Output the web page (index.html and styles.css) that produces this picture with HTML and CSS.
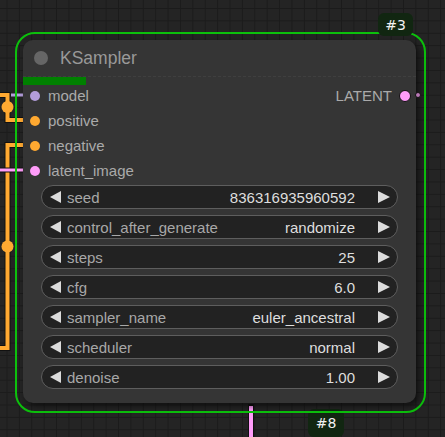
FILE: index.html
```html
<!DOCTYPE html>
<html>
<head>
<meta charset="utf-8">
<link rel="stylesheet" href="styles.css">
</head>
<body>
<div class="canvas">
  <svg class="wires" width="445" height="437" viewBox="0 0 445 437">
    <g fill="none" stroke-linejoin="miter">
      <path d="M0 95 H7.5 V120 H25" stroke="#111" stroke-width="6"/>
      <path d="M0 95 H7.5 V120 H25" stroke="#ffa931" stroke-width="4"/>
      <path d="M25 145 H7.5 V348 H0" stroke="#111" stroke-width="6"/>
      <path d="M25 145 H7.5 V348 H0" stroke="#ffa931" stroke-width="4"/>
      <path d="M0 170 H25" stroke="#111" stroke-width="5"/>
      <path d="M0 170 H25" stroke="#ff9cf9" stroke-width="3"/>
      <path d="M11 95 H25" stroke="#b39ddb" stroke-width="3"/>
      <path d="M251 404 V437" stroke="#111" stroke-width="6"/>
      <path d="M251 406 V437" stroke="#ff9cf9" stroke-width="4"/>
    </g>
    <circle cx="7.5" cy="107" r="6" fill="#ffa931"/>
    <circle cx="7.5" cy="246.5" r="6" fill="#ffa931"/>
  </svg>
  <div class="badge badge-8">#8</div>
  <div class="selection"></div>
  <div class="node">
    <div class="title">
      <span class="title-dot"></span>
      <span class="title-text">KSampler</span>
    </div>
    <div class="progress"></div>
    <div class="slots">
      <div class="inputs">
        <div class="slot"><span class="dot dot-model"></span><span class="slot-label">model</span></div>
        <div class="slot"><span class="dot dot-cond"></span><span class="slot-label">positive</span></div>
        <div class="slot"><span class="dot dot-cond"></span><span class="slot-label">negative</span></div>
        <div class="slot"><span class="dot dot-latent"></span><span class="slot-label">latent_image</span></div>
      </div>
      <div class="outputs">
        <div class="slot"><span class="slot-label">LATENT</span><span class="dot dot-latent dot-out"></span></div>
      </div>
    </div>
    <div class="widgets">
      <div class="widget"><span class="arrow arrow-left"></span><span class="w-label">seed</span><span class="w-value">836316935960592</span><span class="arrow arrow-right"></span></div>
      <div class="widget"><span class="arrow arrow-left"></span><span class="w-label">control_after_generate</span><span class="w-value">randomize</span><span class="arrow arrow-right"></span></div>
      <div class="widget"><span class="arrow arrow-left"></span><span class="w-label">steps</span><span class="w-value">25</span><span class="arrow arrow-right"></span></div>
      <div class="widget"><span class="arrow arrow-left"></span><span class="w-label">cfg</span><span class="w-value">6.0</span><span class="arrow arrow-right"></span></div>
      <div class="widget"><span class="arrow arrow-left"></span><span class="w-label">sampler_name</span><span class="w-value">euler_ancestral</span><span class="arrow arrow-right"></span></div>
      <div class="widget"><span class="arrow arrow-left"></span><span class="w-label">scheduler</span><span class="w-value">normal</span><span class="arrow arrow-right"></span></div>
      <div class="widget"><span class="arrow arrow-left"></span><span class="w-label">denoise</span><span class="w-value">1.00</span><span class="arrow arrow-right"></span></div>
    </div>
  </div>
  <div class="badge badge-3">#3</div>
  <span class="link-stub"></span>
</div>
</body>
</html>
```

FILE: styles.css
```css
html, body {
  margin: 0;
  padding: 0;
  background: #232323;
}

.canvas {
  position: relative;
  width: 445px;
  height: 437px;
  overflow: hidden;
  background-color: #242424;
  background-image:
    linear-gradient(to right, #1b1b1b 1px, transparent 1px),
    linear-gradient(to bottom, #1b1b1b 1px, transparent 1px);
  background-size: 12.4px 12.4px;
  background-position: 6.5px 8px;
  font-family: "Liberation Sans", Arial, sans-serif;
}

.wires {
  position: absolute;
  left: 0;
  top: 0;
}

.selection {
  position: absolute;
  left: 15px;
  top: 32px;
  width: 411px;
  height: 381px;
  box-sizing: border-box;
  border: 2px solid #0cc00c;
  border-radius: 20px;
}

.badge {
  position: absolute;
  background: #112611;
  color: #f2f2f2;
  font-family: "DejaVu Sans", sans-serif;
  font-size: 14px;
  border-radius: 6px;
  display: flex;
  align-items: center;
  justify-content: center;
}

.badge-3 {
  left: 378px;
  top: 13px;
  width: 35px;
  height: 23px;
}

.badge-8 {
  left: 308px;
  top: 409px;
  width: 36px;
  height: 22px;
  padding-bottom: 6px;
  align-items: flex-end;
}

.link-stub {
  position: absolute;
  left: 415px;
  top: 92px;
  width: 4px;
  height: 4px;
  border-radius: 50%;
  background: #b978b6;
  border: 1px solid #111;
}

.node {
  position: absolute;
  left: 23px;
  top: 40px;
  width: 393px;
  height: 363px;
  box-sizing: border-box;
  background: #353535;
  border-radius: 10px;
  box-shadow: 3px 3px 6px rgba(0, 0, 0, 0.55);
  padding-bottom: 14px;
}

.title {
  height: 37px;
  box-sizing: border-box;
  display: flex;
  align-items: center;
  padding-left: 11px;
  border-bottom: 1px dashed #3f3f3f;
}

.title-dot {
  width: 14px;
  height: 14px;
  border-radius: 50%;
  background: #666;
  margin-right: 12px;
}

.title-text {
  color: #999;
  font-size: 17.5px;
}

.progress {
  position: absolute;
  left: 0;
  top: 37px;
  width: 63px;
  height: 8px;
  background: #008000;
}

.slots {
  display: flex;
  justify-content: space-between;
  padding-top: 6px;
}

.inputs, .outputs {
  display: flex;
  flex-direction: column;
}

.slot {
  height: 25px;
  display: flex;
  align-items: center;
  font-size: 15px;
  color: #aaa;
}

.inputs .slot {
  padding-left: 7px;
}

.outputs .slot {
  padding-right: 5px;
}

.dot {
  width: 10px;
  height: 10px;
  border-radius: 50%;
  box-sizing: border-box;
}

.inputs .dot {
  margin-right: 8px;
}

.dot-model { background: #b39ddb; }
.dot-cond { background: #ffa931; }
.dot-latent { background: #ff9cf9; }

.dot-out {
  width: 12px;
  height: 12px;
  border: 1px solid #111;
  margin-left: 7px;
}

.widgets {
  display: flex;
  flex-direction: column;
  gap: 6px;
  margin: 2px 18px 0 18px;
}

.widget {
  height: 24px;
  box-sizing: border-box;
  display: flex;
  align-items: center;
  background: #222;
  border: 1px solid #5e5e5e;
  border-radius: 12px;
  padding: 0 7px 0 8px;
  font-size: 15px;
}

.arrow {
  width: 0;
  height: 0;
  border-top: 6px solid transparent;
  border-bottom: 6px solid transparent;
}

.arrow-left {
  border-right: 11px solid #dcdcdc;
  margin-right: 6px;
}

.arrow-right {
  border-left: 12px solid #dcdcdc;
}

.w-label {
  flex: 1;
  color: #a8a8a8;
  white-space: nowrap;
}

.w-value {
  color: #dedede;
  margin-right: 23px;
  white-space: nowrap;
}
```
